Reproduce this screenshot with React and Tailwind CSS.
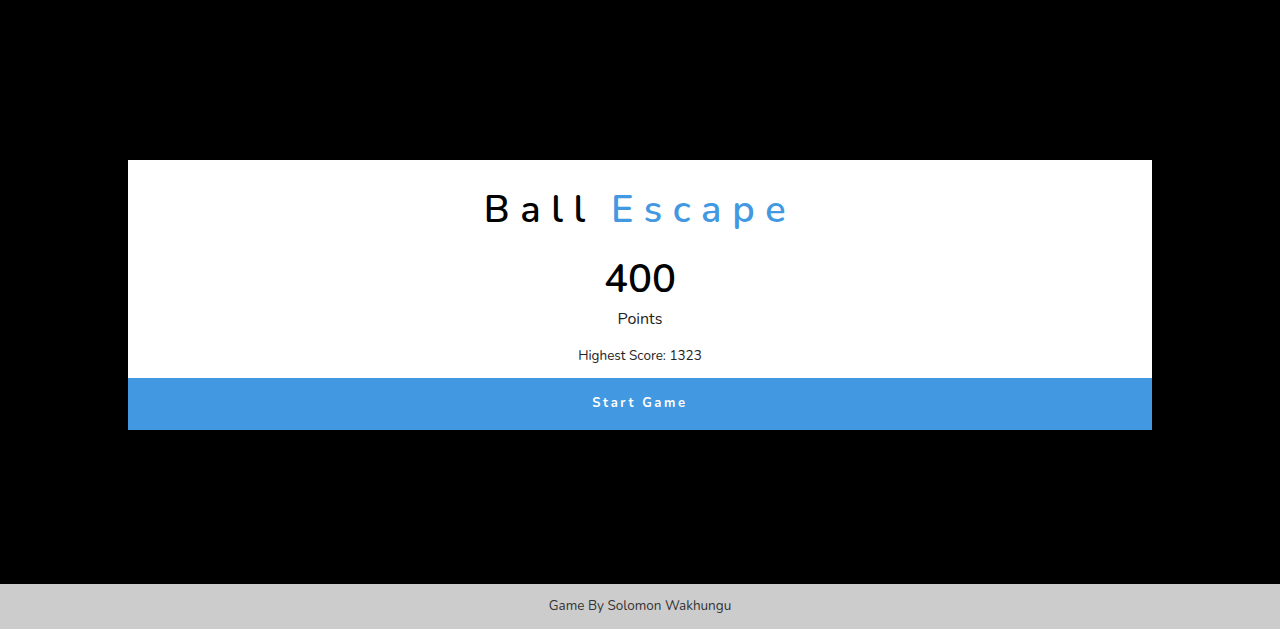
import React from 'react';

export default function App() {
  return (
    <div className="h-screen w-screen flex flex-col bg-black overflow-hidden" style={{ fontFamily: '"Nunito", Lato, "Open Sans", sans-serif' }}>
      <div className="flex-1 flex items-center justify-center pt-[6px]">
        <div className="w-[1024px] bg-white flex flex-col items-center">
          <h1 className="mt-[20px] h-[58px] flex items-center text-[38px] font-semibold tracking-[0.28em] text-black">
            Ball <span className="ml-[0.4em] text-[#4299e1]">Escape</span>
          </h1>
          <div className="mt-[21px] h-[40px] flex items-center text-[40px] font-semibold text-black leading-none">400</div>
          <div className="mt-[8px] h-[24px] flex items-center text-[16px] text-[#222]">Points</div>
          <div className="mt-[13px] h-[24px] flex items-center text-[13.5px] text-[#222]">Highest Score: 1323</div>
          <button className="mt-[10px] w-full h-[52px] bg-[#4299e1] text-white text-[13px] font-bold tracking-[0.2em]">
            Start Game
          </button>
        </div>
      </div>
      <footer className="h-[45px] bg-[#cccccc] flex items-center justify-center text-[13.5px] text-[#333]">
        Game By Solomon Wakhungu
      </footer>
    </div>
  );
}
